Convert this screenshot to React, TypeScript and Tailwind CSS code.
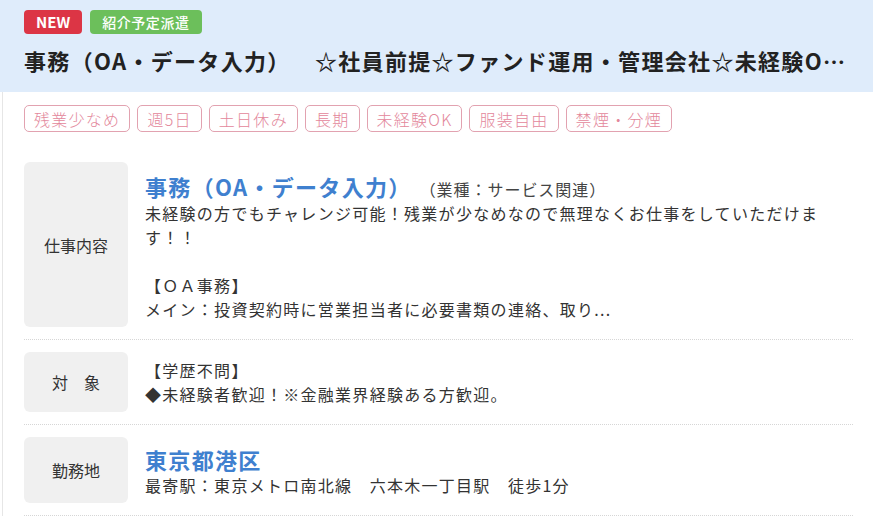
const tags = ['残業少なめ', '週5日', '土日休み', '長期', '未経験OK', '服装自由', '禁煙・分煙']

function Label({ children }: { children: React.ReactNode }) {
  return (
    <div className="w-[104px] shrink-0 rounded-[6px] bg-[#f0f0f0] flex items-center justify-center text-[16px] text-[#333]">
      {children}
    </div>
  )
}

function Row({ label, children, pad }: { label: string; children: React.ReactNode; pad: string }) {
  return (
    <div className="flex gap-[17px] py-[12px] border-b border-dotted border-[#d6d6d6]">
      <Label>{label}</Label>
      <div className={`flex-1 min-w-0 ${pad} text-[16px] leading-[24px] tracking-[0.08em] text-[#333]`}>
        {children}
      </div>
    </div>
  )
}

export default function App() {
  return (
    <div
      className="w-[875px] h-[518px] overflow-hidden bg-white"
      style={{ fontFamily: '"Noto Sans CJK JP", "Noto Sans", sans-serif' }}
    >
      {/* Header */}
      <div className="bg-[#dfecfb] px-[24px] pt-[10px] pb-[16px] mr-[2px]">
        <div className="flex gap-[8px]">
          <span className="h-[24px] px-[12px] rounded-[4px] bg-[#dc3545] text-white text-[15px] font-bold flex items-center">
            NEW
          </span>
          <span className="h-[24px] px-[12px] rounded-[4px] bg-[#6cbf5b] text-white text-[14px] font-medium tracking-[0.04em] flex items-center">
            紹介予定派遣
          </span>
        </div>
        <div className="mt-[10px] leading-[32px] text-[22px] font-bold tracking-[0.06em] text-[#222] whitespace-nowrap overflow-hidden text-ellipsis max-w-[829px]">
          {'事務（OA・データ入力）　'}
          <span className="inline-block w-[12px]" />
          {'☆社員前提☆ファンド運用・管理会社☆未経験OK☆土日祝休み☆残業少なめ'}
        </div>
      </div>

      {/* Body */}
      <div className="ml-[2px] border-l border-[#e6e6e6] pl-[21px] pr-[20px] pt-[13px] mr-[2px]">
        <div className="flex flex-wrap gap-[7px] mb-[18px]">
          {tags.map((t) => (
            <span
              key={t}
              className="h-[27px] px-[9px] rounded-[5px] border border-[#e2a2b0] text-[#e3879b] text-[16px] font-light tracking-[0.08em] flex items-center"
            >
              {t}
            </span>
          ))}
        </div>

        <Row label="仕事内容" pad="pt-[10px] pb-[6px]">
          <div className="flex items-baseline">
            <span className="text-[22px] leading-[28px] font-bold text-[#3f80cf] tracking-[0.06em]">
              事務（OA・データ入力）
            </span>
            <span className="ml-[8px] text-[16px] text-[#444] tracking-[0.06em]">（業種：サービス関連）</span>
          </div>
          <div>
            未経験の方でもチャレンジ可能！残業が少なめなので無理なくお仕事をしていただけま
            <br />
            す！！
          </div>
          <div>&nbsp;</div>
          <div>【ＯＡ事務】</div>
          <div>メイン：投資契約時に営業担当者に必要書類の連絡、取り...</div>
        </Row>

        <Row label="対　象" pad="py-[6px]">
          <div>【学歴不問】</div>
          <div>◆未経験者歓迎！※金融業界経験ある方歓迎。</div>
        </Row>

        <Row label="勤務地" pad="pt-[8px] pb-[6px]">
          <div className="text-[22px] leading-[28px] font-bold text-[#3f80cf] tracking-[0.06em]">東京都港区</div>
          <div>最寄駅：東京メトロ南北線　六本木一丁目駅　徒歩1分</div>
        </Row>
      </div>
    </div>
  )
}
